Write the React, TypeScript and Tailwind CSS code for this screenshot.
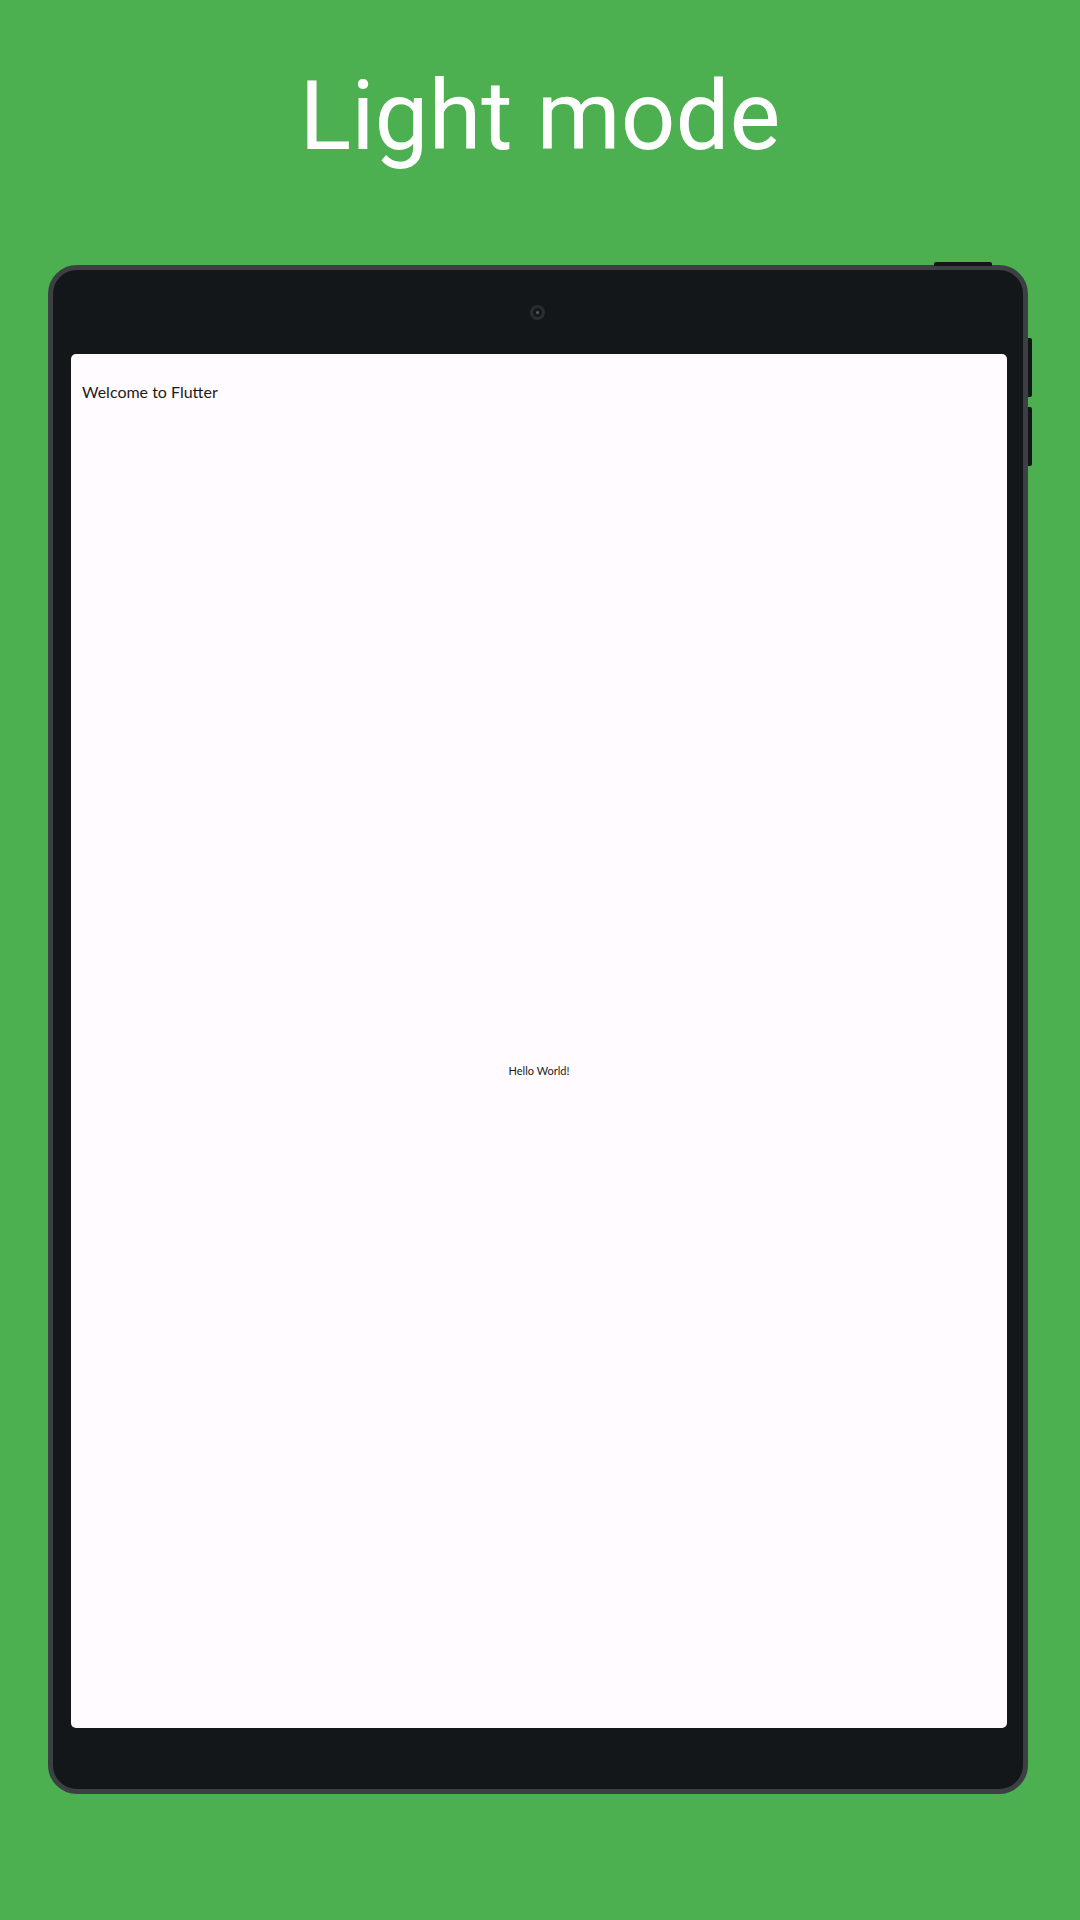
export default function App() {
  return (
    <div className="w-[1080px] h-[1920px] bg-[#4caf50] flex flex-col overflow-hidden">
      {/* Title */}
      <h1
        className="pt-[68px] text-center text-white text-[96px] leading-none font-normal"
        style={{ fontFamily: 'Roboto, "Noto Sans", sans-serif' }}
      >
        Light mode
      </h1>

      {/* Tablet */}
      <div className="relative mt-[101px] ml-[48px] w-[980px] h-[1529px] rounded-[29px] border-[5px] border-[#3c4043] bg-[#131719] flex flex-col">
        {/* hardware buttons */}
        <div className="absolute left-[881px] top-[-8px] w-[58px] h-[4px] rounded-t-[2px] bg-[#131719]" />
        <div className="absolute right-[-9px] top-[68px] w-[4px] h-[59px] rounded-r-[2px] bg-[#131719]" />
        <div className="absolute right-[-9px] top-[137px] w-[4px] h-[59px] rounded-r-[2px] bg-[#131719]" />

        {/* camera */}
        <div className="h-[84px] flex items-center justify-center pr-[2px]">
          <div className="w-[15px] h-[15px] rounded-full bg-[#2a2e31] flex items-center justify-center">
            <div className="w-[9px] h-[9px] rounded-full bg-[#16191b] flex items-center justify-center">
              <div className="w-[3px] h-[3px] rounded-full bg-[#5a5e61]" />
            </div>
          </div>
        </div>

        {/* Screen */}
        <div
          className="ml-[18px] w-[936px] h-[1374px] rounded-[5px] bg-[#fffbfe] flex flex-col"
          style={{ fontFamily: 'Lato, "Noto Sans", sans-serif' }}
        >
          <div className="h-[60px] pt-[28px] pl-[11px] text-[16px] leading-[20px] text-[#1d1b20]">
            Welcome to Flutter
          </div>
          <div className="flex-1 flex items-center justify-center pb-[1px]">
            <span className="text-[11px] leading-[13px] text-[#1d1b20]">Hello World!</span>
          </div>
        </div>
      </div>
    </div>
  )
}
